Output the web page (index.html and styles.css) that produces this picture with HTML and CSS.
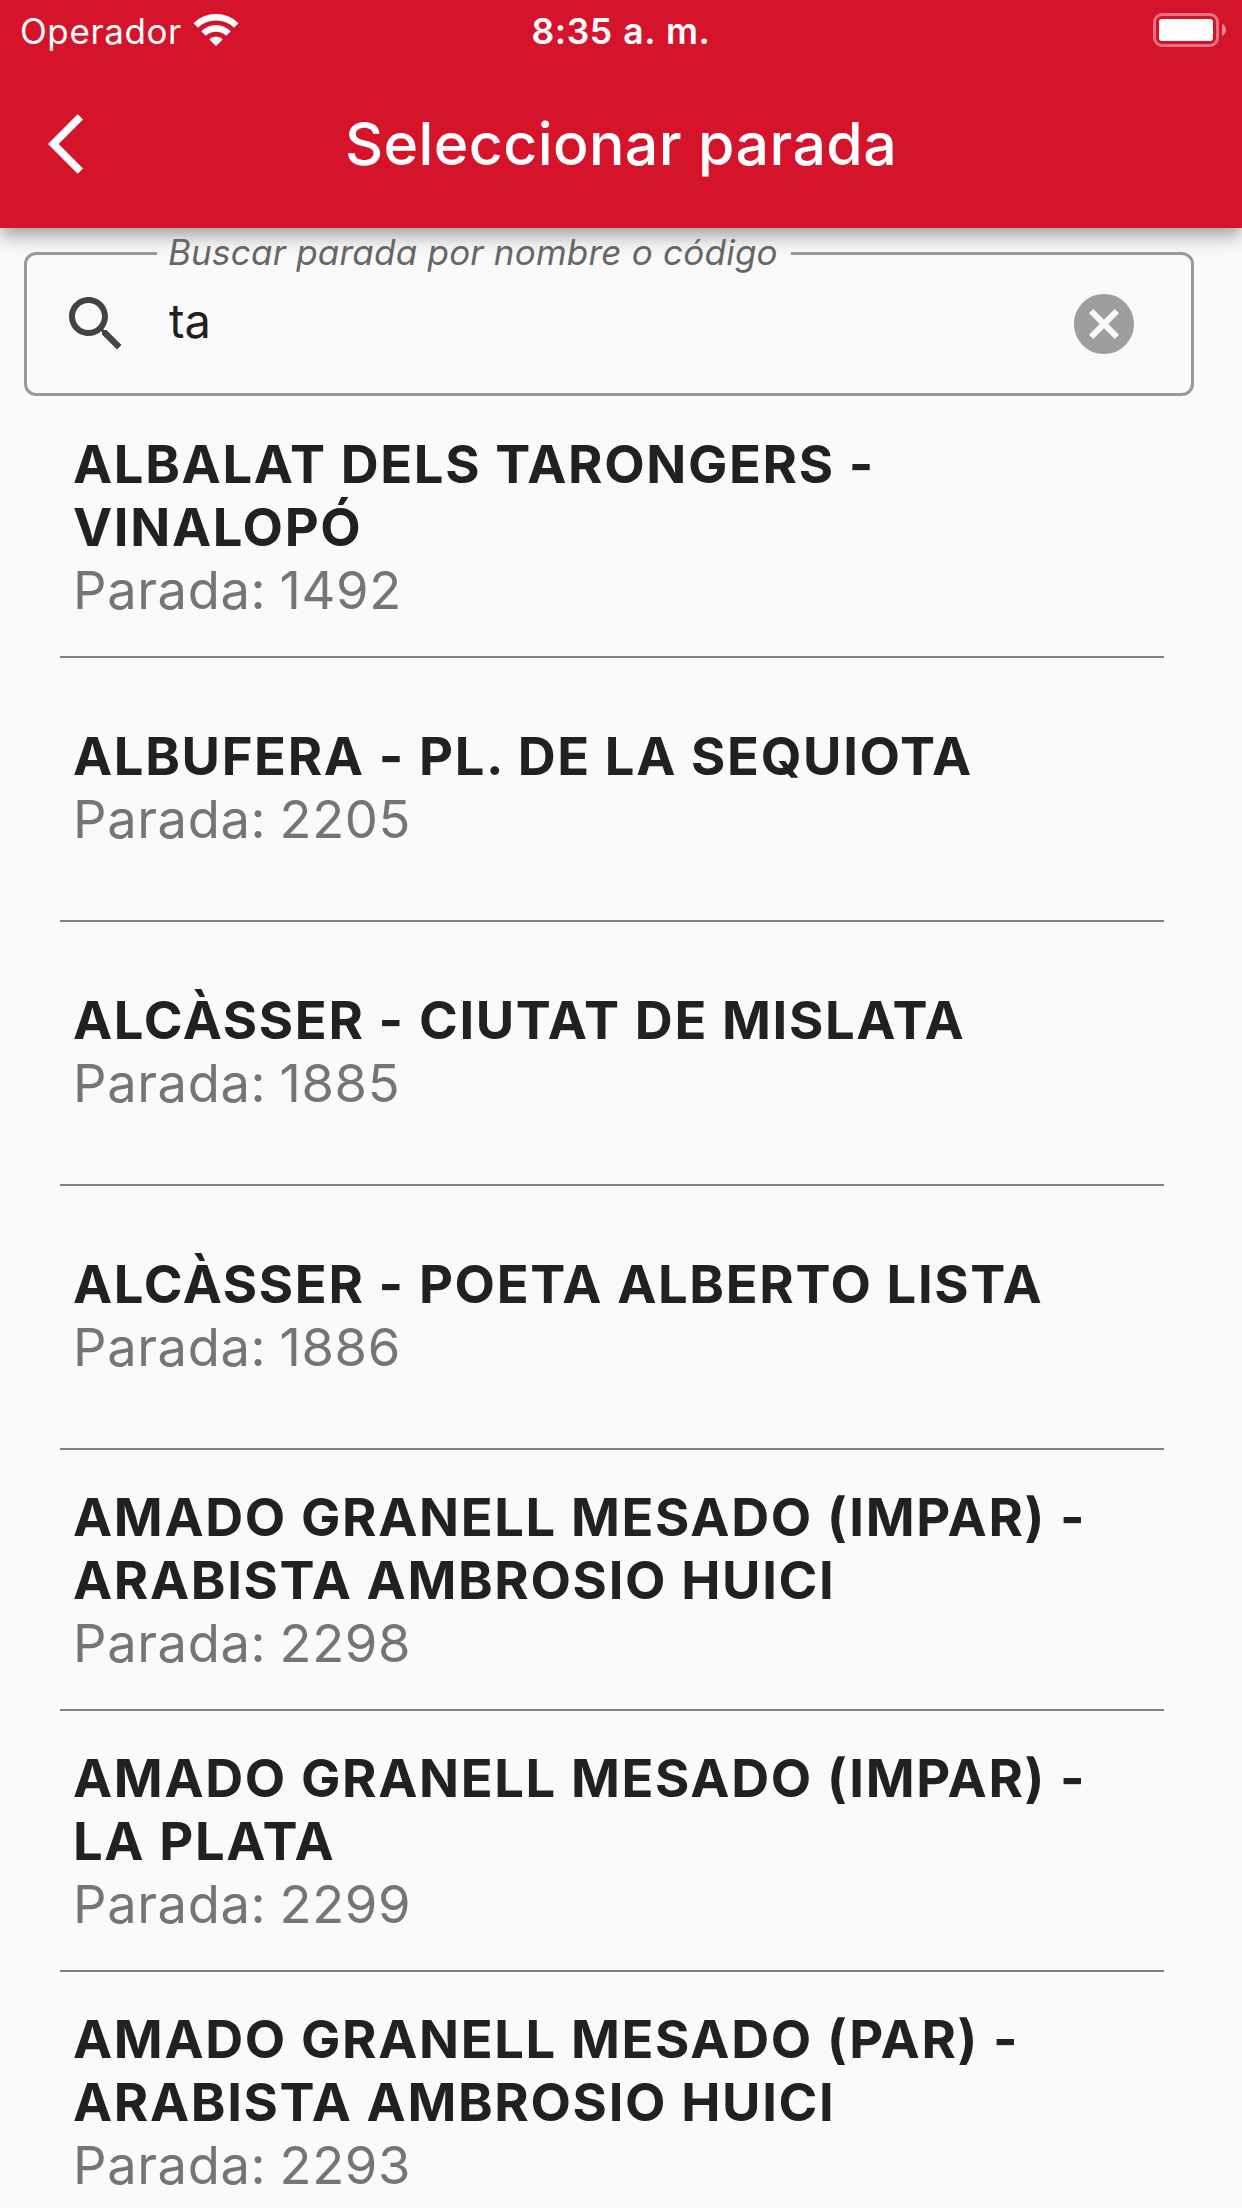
FILE: index.html
```html
<!DOCTYPE html>
<html lang="es">
<head>
    <meta charset="UTF-8">
    <meta name="viewport" content="width=device-width, initial-scale=1.0">
    <title>Seleccionar parada</title>
    <link rel="stylesheet" href="styles.css">
</head>
<body>
    <header class="app-bar">
        <div class="status-bar">
            <div class="carrier">
                <span>Operador</span>
                <svg class="wifi" viewBox="0 0 46 34" fill="#fff">
                    <path d="M0.5 10.2A32 32 0 0 1 45.5 10.2L41 14.8A25.6 25.6 0 0 0 5 14.8Z"/>
                    <path d="M8.2 18.2A21 21 0 0 1 37.8 18.2L33.2 22.8A14.6 14.6 0 0 0 12.8 22.8Z"/>
                    <path d="M16.2 26.2A9.7 9.7 0 0 1 29.8 26.2L23 33.2Z"/>
                </svg>
            </div>
            <span class="time">8:35 a. m.</span>
            <div class="battery">
                <svg viewBox="0 0 74 34">
                    <rect x="1.5" y="1.5" width="63" height="31" rx="7.5" fill="none" stroke="#fff" stroke-opacity=".4" stroke-width="3"/>
                    <rect x="6" y="6" width="54" height="22" rx="3" fill="#fff"/>
                    <path d="M69 11C74.3 13 74.3 21 69 23Z" fill="#fff" fill-opacity=".5"/>
                </svg>
            </div>
        </div>
        <div class="toolbar">
            <button class="back" aria-label="Atrás">
                <svg viewBox="0 0 24 24" fill="#fff"><path d="M11.67 3.87L9.9 2.1 0 12l9.9 9.9 1.77-1.77L3.54 12z"/></svg>
            </button>
            <h1>Seleccionar parada</h1>
        </div>
    </header>

    <main>
        <fieldset class="search">
            <legend>Buscar parada por nombre o código</legend>
            <div class="search-row">
                <svg class="icon" viewBox="0 0 24 24" fill="#444"><path d="M15.5 14h-.79l-.28-.27C15.41 12.59 16 11.11 16 9.5 16 5.91 13.09 3 9.5 3S3 5.91 3 9.5 5.91 16 9.5 16c1.61 0 3.09-.59 4.23-1.57l.27.28v.79l5 4.99L20.49 19l-4.99-5zm-6 0C7.01 14 5 11.99 5 9.5S7.01 5 9.5 5 14 7.01 14 9.5 11.99 14 9.5 14z"/></svg>
                <input type="text" value="ta">
                <svg class="icon" viewBox="0 0 24 24" fill="#9e9e9e"><path d="M12 2C6.47 2 2 6.47 2 12s4.47 10 10 10 10-4.47 10-10S17.53 2 12 2zm5 13.59L15.59 17 12 13.41 8.41 17 7 15.59 10.59 12 7 8.41 8.41 7 12 10.59 15.59 7 17 8.41 13.41 12 17 15.59z"/></svg>
            </div>
        </fieldset>

        <ul class="stops">
            <li class="stop">
                <h2>ALBALAT DELS TARONGERS -<br>VINALOPÓ</h2>
                <p>Parada: 1492</p>
            </li>
            <li class="stop single">
                <h2>ALBUFERA - PL. DE LA SEQUIOTA</h2>
                <p>Parada: 2205</p>
            </li>
            <li class="stop single">
                <h2>ALCÀSSER - CIUTAT DE MISLATA</h2>
                <p>Parada: 1885</p>
            </li>
            <li class="stop single">
                <h2>ALCÀSSER - POETA ALBERTO LISTA</h2>
                <p>Parada: 1886</p>
            </li>
            <li class="stop">
                <h2>AMADO GRANELL MESADO (IMPAR) -<br>ARABISTA AMBROSIO HUICI</h2>
                <p>Parada: 2298</p>
            </li>
            <li class="stop">
                <h2>AMADO GRANELL MESADO (IMPAR) -<br>LA PLATA</h2>
                <p>Parada: 2299</p>
            </li>
            <li class="stop">
                <h2>AMADO GRANELL MESADO (PAR) -<br>ARABISTA AMBROSIO HUICI</h2>
                <p>Parada: 2293</p>
            </li>
        </ul>
    </main>
</body>
</html>
```
FILE: styles.css
```css
* {
    margin: 0;
    padding: 0;
    box-sizing: border-box;
}

body {
    width: 1242px;
    height: 2208px;
    overflow: hidden;
    background: #fafafa;
    color: #212121;
    font-family: Inter, "Liberation Sans", sans-serif;
}

.app-bar {
    height: 228px;
    background: #d5132b;
    color: #fff;
    box-shadow: 0 6px 12px -3px rgba(0, 0, 0, 0.2), 0 12px 15px rgba(0, 0, 0, 0.14), 0 3px 30px rgba(0, 0, 0, 0.12);
}

.status-bar {
    display: grid;
    grid-template-columns: 1fr auto 1fr;
    align-items: center;
    height: 60px;
    padding: 0 15px 0 20px;
    font-size: 35px;
    letter-spacing: 0.6px;
}

.carrier {
    display: flex;
    align-items: center;
    gap: 11px;
    padding-top: 1px;
}

.wifi {
    width: 46px;
    height: 34px;
    margin-top: -2px;
}

.time {
    padding: 2px 5px 0 0;
    font-size: 35.5px;
    font-weight: 600;
    word-spacing: 1px;
}

.battery {
    display: flex;
    justify-content: flex-end;
}

.battery svg {
    width: 74px;
    height: 34px;
}

.toolbar {
    display: grid;
    grid-template-columns: 120px 1fr 120px;
    align-items: center;
    height: 168px;
}

.back {
    display: flex;
    padding-left: 48px;
    background: none;
    border: none;
}

.back svg {
    width: 72px;
    height: 72px;
}

h1 {
    padding-bottom: 2px;
    font-size: 59px;
    font-weight: 550;
    letter-spacing: 0.4px;
    text-align: center;
}

.search {
    height: 163px;
    margin: 5px 48px 0 24px;
    padding: 0 51px 0 33px;
    border: 3px solid #999;
    border-radius: 12px;
}

.search legend {
    height: 41px;
    margin-left: 97px;
    padding: 0 13px 0 11px;
    color: #666;
    font-size: 35px;
    font-style: italic;
    letter-spacing: 0.22px;
    line-height: 39px;
}

.search-row {
    display: flex;
    align-items: center;
    height: 100px;
}

.icon {
    flex: none;
    width: 72px;
    height: 72px;
}

.search input {
    flex: 1;
    margin-left: 37px;
    padding-bottom: 8px;
    border: none;
    outline: none;
    background: none;
    color: #212121;
    font-family: inherit;
    font-size: 47px;
}

.stops {
    margin: 1px 78px 0 60px;
    list-style: none;
}

.stop {
    display: flex;
    flex-direction: column;
    justify-content: center;
    height: 261px;
    padding: 2px 13px 0;
    border-bottom: 2px solid #808080;
    font-size: 52.5px;
    line-height: 63px;
    white-space: nowrap;
}

.stop.single {
    height: 264px;
    padding: 0 13px 3px;
}

.stop h2 {
    font-size: inherit;
    font-weight: 700;
    letter-spacing: 1.65px;
}

.stop p {
    color: #757575;
    letter-spacing: 0.6px;
    word-spacing: -2px;
}
```
